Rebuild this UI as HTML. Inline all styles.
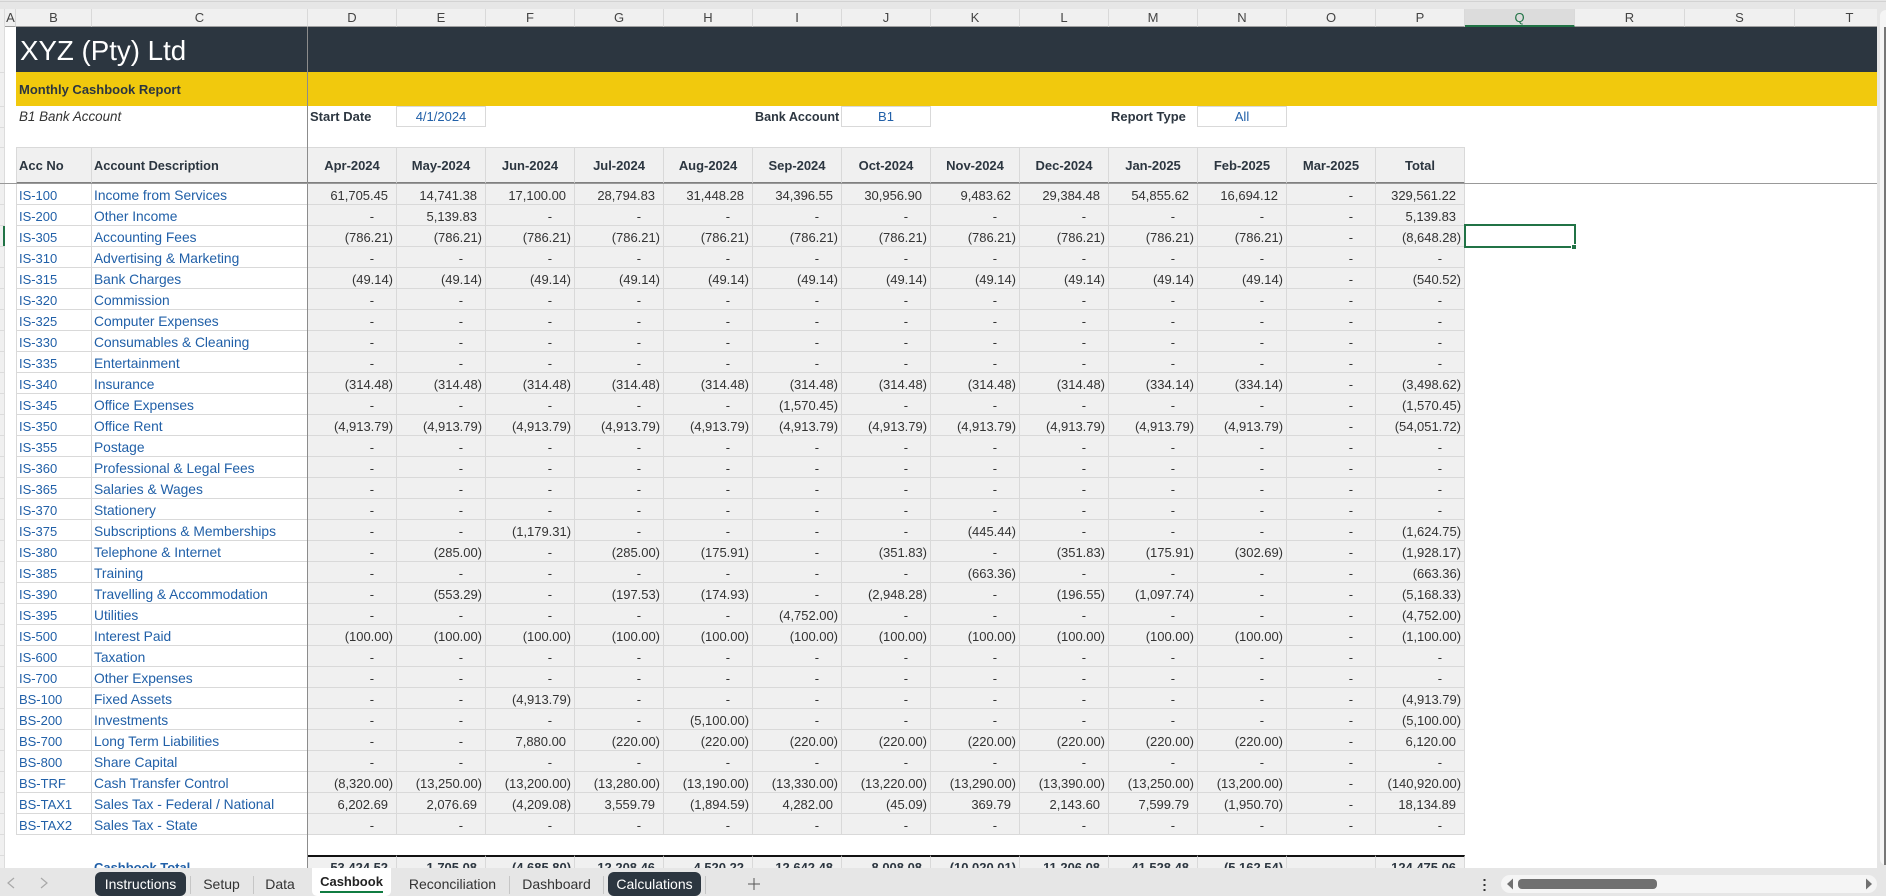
<!DOCTYPE html>
<html lang="en"><head><meta charset="utf-8"><title>Monthly Cashbook Report</title>
<style>
*{box-sizing:border-box}
html,body{margin:0;padding:0;width:1886px;height:896px;overflow:hidden;background:#e6e6e6;font-family:"Liberation Sans",sans-serif}
.p{position:absolute}
#sheet{position:absolute;left:0;top:0;width:1877px;height:868px;overflow:hidden;background:#fff}
.ch{position:absolute;top:9px;height:18px;background:#f0f0f0;border-bottom:1px solid #a0a0a0;border-right:1px solid #d9d9d9;text-align:center;font-size:13px;line-height:17px;color:#444}
table{position:absolute;left:16px;top:147px;border-collapse:separate;border-spacing:0;table-layout:fixed;width:1449px;font-size:13px;letter-spacing:-.02px;color:#333}
td,th{height:21px;padding:3px 8px 0 0;line-height:17px;text-align:right;white-space:nowrap;overflow:hidden;background:#f0f0f0;border-right:1px solid #d9d9d9;border-bottom:1px solid #d9d9d9}
th{height:37px;padding:0;text-align:center;font-weight:bold;color:#2c3640;border-top:1px solid #d9d9d9;border-bottom:2px solid #808080}
th.l{text-align:left;padding-left:2px}
th:first-child,td.a{border-left:1px solid #d9d9d9}
td.a,td.b{text-align:left;padding-left:2px;padding-right:0;background:#fff;color:#2160a8}
td.b{border-right:0;font-size:13.8px}
th.c{border-right:0;font-size:12.8px}
td.n{padding-right:3px}
td.d{padding-right:22px}
tr.t td{border-top:0;border-bottom:0;font-weight:bold;color:#2c3640}
tr.t td.a,tr.t td.b{border:0;background:#fff}
tr.t td.b{color:#2160a8;font-size:13px}
tr.t td.x{border-top:2px solid #111;padding-top:1px}
tr.g td{background:#fff;border:0;height:20px;padding:0}
.box{position:absolute;top:106px;height:21px;width:90px;border:1px solid #d9d9d9;text-align:center;font-size:13px;line-height:20px;color:#2160a8;background:#fff}
.lb{position:absolute;top:107px;font-size:13px;line-height:20px;color:#2c3640;font-weight:bold;white-space:nowrap}
.tab{position:absolute;top:872px;height:24px;font-size:14px;line-height:24px;color:#333;text-align:center;white-space:nowrap}
.dk{background:#2c3640;color:#fff;border-radius:6px}
.sep{position:absolute;top:876px;width:1px;height:18px;background:#c6c6c6}
.rl{position:absolute;left:0;width:5px;height:1px;background:#dcdcdc}
</style></head><body>
<div class="p" style="left:0;top:1px;width:1886px;height:1px;background:#d2d2d2"></div>
<div id="sheet">
<div class="p" style="left:0;top:0;width:1877px;height:9px;background:#e6e6e6"></div>
<div class="p" style="left:0;top:1px;width:1877px;height:1px;background:#d2d2d2"></div>
<div class="p" style="left:0;top:9px;width:5px;height:859px;background:#f0f0f0;border-right:1px solid #dcdcdc"></div>
<div class="p" style="left:3px;top:225px;width:2px;height:21px;background:#217346"></div>
<div class="rl" style="top:72px"></div><div class="rl" style="top:106px"></div><div class="rl" style="top:127px"></div><div class="rl" style="top:147px"></div><div class="rl" style="top:204px"></div><div class="rl" style="top:225px"></div><div class="rl" style="top:246px"></div><div class="rl" style="top:267px"></div><div class="rl" style="top:288px"></div><div class="rl" style="top:309px"></div><div class="rl" style="top:330px"></div><div class="rl" style="top:351px"></div><div class="rl" style="top:372px"></div><div class="rl" style="top:393px"></div><div class="rl" style="top:414px"></div><div class="rl" style="top:435px"></div><div class="rl" style="top:456px"></div><div class="rl" style="top:477px"></div><div class="rl" style="top:498px"></div><div class="rl" style="top:519px"></div><div class="rl" style="top:540px"></div><div class="rl" style="top:561px"></div><div class="rl" style="top:582px"></div><div class="rl" style="top:603px"></div><div class="rl" style="top:624px"></div><div class="rl" style="top:645px"></div><div class="rl" style="top:666px"></div><div class="rl" style="top:687px"></div><div class="rl" style="top:708px"></div><div class="rl" style="top:729px"></div><div class="rl" style="top:750px"></div><div class="rl" style="top:771px"></div><div class="rl" style="top:792px"></div><div class="rl" style="top:813px"></div><div class="rl" style="top:834px"></div><div class="rl" style="top:855px"></div>
<div class="ch" style="left:5px;width:11px;padding-left:1px">A</div>
<div class="ch" style="left:16px;width:76px">B</div>
<div class="ch" style="left:92px;width:216px">C</div>
<div class="ch" style="left:308px;width:89px">D</div>
<div class="ch" style="left:397px;width:89px">E</div>
<div class="ch" style="left:486px;width:89px">F</div>
<div class="ch" style="left:575px;width:89px">G</div>
<div class="ch" style="left:664px;width:89px">H</div>
<div class="ch" style="left:753px;width:89px">I</div>
<div class="ch" style="left:842px;width:89px">J</div>
<div class="ch" style="left:931px;width:89px">K</div>
<div class="ch" style="left:1020px;width:89px">L</div>
<div class="ch" style="left:1109px;width:89px">M</div>
<div class="ch" style="left:1198px;width:89px">N</div>
<div class="ch" style="left:1287px;width:89px">O</div>
<div class="ch" style="left:1376px;width:89px">P</div>
<div class="ch" style="left:1465px;width:110px;background:#dcdcdc;color:#217346;border-bottom:2px solid #217346">Q</div>
<div class="ch" style="left:1575px;width:110px">R</div>
<div class="ch" style="left:1685px;width:110px">S</div>
<div class="ch" style="left:1795px;width:110px">T</div>

<div class="p" style="left:16px;top:27px;width:1861px;height:45px;background:#2c3640"></div>
<div class="p" style="left:16px;top:72px;width:1861px;height:34px;background:#f1c90d"></div>
<div class="p" style="left:20px;top:34px;font-size:27.7px;line-height:34px;color:#fff;white-space:nowrap">XYZ (Pty) Ltd</div>
<div class="p" style="left:19px;top:79.500px;font-size:13px;line-height:20px;font-weight:bold;color:#2c3640;white-space:nowrap">Monthly Cashbook Report</div>
<div class="p" style="left:19px;top:106.500px;font-size:13.4px;line-height:20px;font-style:italic;color:#333;white-space:nowrap">B1 Bank Account</div>
<div class="lb" style="left:310px">Start Date</div>
<div class="box" style="left:396px">4/1/2024</div>
<div class="lb" style="left:755px;font-size:12.6px">Bank Account</div>
<div class="box" style="left:841px">B1</div>
<div class="lb" style="left:1111px">Report Type</div>
<div class="box" style="left:1197px">All</div>

<table>
<colgroup><col style="width:76px"><col style="width:216px"><col style="width:89px"><col style="width:89px"><col style="width:89px"><col style="width:89px"><col style="width:89px"><col style="width:89px"><col style="width:89px"><col style="width:89px"><col style="width:89px"><col style="width:89px"><col style="width:89px"><col style="width:89px"><col style="width:89px"></colgroup>
<tr><th class="l">Acc No<th class="l c">Account Description<th>Apr-2024<th>May-2024<th>Jun-2024<th>Jul-2024<th>Aug-2024<th>Sep-2024<th>Oct-2024<th>Nov-2024<th>Dec-2024<th>Jan-2025<th>Feb-2025<th>Mar-2025<th>Total
<tr><td class="a">IS-100<td class="b">Income from Services<td>61,705.45<td>14,741.38<td>17,100.00<td>28,794.83<td>31,448.28<td>34,396.55<td>30,956.90<td>9,483.62<td>29,384.48<td>54,855.62<td>16,694.12<td class="d">-<td>329,561.22
<tr><td class="a">IS-200<td class="b">Other Income<td class="d">-<td>5,139.83<td class="d">-<td class="d">-<td class="d">-<td class="d">-<td class="d">-<td class="d">-<td class="d">-<td class="d">-<td class="d">-<td class="d">-<td>5,139.83
<tr><td class="a">IS-305<td class="b">Accounting Fees<td class="n">(786.21)<td class="n">(786.21)<td class="n">(786.21)<td class="n">(786.21)<td class="n">(786.21)<td class="n">(786.21)<td class="n">(786.21)<td class="n">(786.21)<td class="n">(786.21)<td class="n">(786.21)<td class="n">(786.21)<td class="d">-<td class="n">(8,648.28)
<tr><td class="a">IS-310<td class="b">Advertising &amp; Marketing<td class="d">-<td class="d">-<td class="d">-<td class="d">-<td class="d">-<td class="d">-<td class="d">-<td class="d">-<td class="d">-<td class="d">-<td class="d">-<td class="d">-<td class="d">-
<tr><td class="a">IS-315<td class="b">Bank Charges<td class="n">(49.14)<td class="n">(49.14)<td class="n">(49.14)<td class="n">(49.14)<td class="n">(49.14)<td class="n">(49.14)<td class="n">(49.14)<td class="n">(49.14)<td class="n">(49.14)<td class="n">(49.14)<td class="n">(49.14)<td class="d">-<td class="n">(540.52)
<tr><td class="a">IS-320<td class="b">Commission<td class="d">-<td class="d">-<td class="d">-<td class="d">-<td class="d">-<td class="d">-<td class="d">-<td class="d">-<td class="d">-<td class="d">-<td class="d">-<td class="d">-<td class="d">-
<tr><td class="a">IS-325<td class="b">Computer Expenses<td class="d">-<td class="d">-<td class="d">-<td class="d">-<td class="d">-<td class="d">-<td class="d">-<td class="d">-<td class="d">-<td class="d">-<td class="d">-<td class="d">-<td class="d">-
<tr><td class="a">IS-330<td class="b">Consumables &amp; Cleaning<td class="d">-<td class="d">-<td class="d">-<td class="d">-<td class="d">-<td class="d">-<td class="d">-<td class="d">-<td class="d">-<td class="d">-<td class="d">-<td class="d">-<td class="d">-
<tr><td class="a">IS-335<td class="b">Entertainment<td class="d">-<td class="d">-<td class="d">-<td class="d">-<td class="d">-<td class="d">-<td class="d">-<td class="d">-<td class="d">-<td class="d">-<td class="d">-<td class="d">-<td class="d">-
<tr><td class="a">IS-340<td class="b">Insurance<td class="n">(314.48)<td class="n">(314.48)<td class="n">(314.48)<td class="n">(314.48)<td class="n">(314.48)<td class="n">(314.48)<td class="n">(314.48)<td class="n">(314.48)<td class="n">(314.48)<td class="n">(334.14)<td class="n">(334.14)<td class="d">-<td class="n">(3,498.62)
<tr><td class="a">IS-345<td class="b">Office Expenses<td class="d">-<td class="d">-<td class="d">-<td class="d">-<td class="d">-<td class="n">(1,570.45)<td class="d">-<td class="d">-<td class="d">-<td class="d">-<td class="d">-<td class="d">-<td class="n">(1,570.45)
<tr><td class="a">IS-350<td class="b">Office Rent<td class="n">(4,913.79)<td class="n">(4,913.79)<td class="n">(4,913.79)<td class="n">(4,913.79)<td class="n">(4,913.79)<td class="n">(4,913.79)<td class="n">(4,913.79)<td class="n">(4,913.79)<td class="n">(4,913.79)<td class="n">(4,913.79)<td class="n">(4,913.79)<td class="d">-<td class="n">(54,051.72)
<tr><td class="a">IS-355<td class="b">Postage<td class="d">-<td class="d">-<td class="d">-<td class="d">-<td class="d">-<td class="d">-<td class="d">-<td class="d">-<td class="d">-<td class="d">-<td class="d">-<td class="d">-<td class="d">-
<tr><td class="a">IS-360<td class="b">Professional &amp; Legal Fees<td class="d">-<td class="d">-<td class="d">-<td class="d">-<td class="d">-<td class="d">-<td class="d">-<td class="d">-<td class="d">-<td class="d">-<td class="d">-<td class="d">-<td class="d">-
<tr><td class="a">IS-365<td class="b">Salaries &amp; Wages<td class="d">-<td class="d">-<td class="d">-<td class="d">-<td class="d">-<td class="d">-<td class="d">-<td class="d">-<td class="d">-<td class="d">-<td class="d">-<td class="d">-<td class="d">-
<tr><td class="a">IS-370<td class="b">Stationery<td class="d">-<td class="d">-<td class="d">-<td class="d">-<td class="d">-<td class="d">-<td class="d">-<td class="d">-<td class="d">-<td class="d">-<td class="d">-<td class="d">-<td class="d">-
<tr><td class="a">IS-375<td class="b">Subscriptions &amp; Memberships<td class="d">-<td class="d">-<td class="n">(1,179.31)<td class="d">-<td class="d">-<td class="d">-<td class="d">-<td class="n">(445.44)<td class="d">-<td class="d">-<td class="d">-<td class="d">-<td class="n">(1,624.75)
<tr><td class="a">IS-380<td class="b">Telephone &amp; Internet<td class="d">-<td class="n">(285.00)<td class="d">-<td class="n">(285.00)<td class="n">(175.91)<td class="d">-<td class="n">(351.83)<td class="d">-<td class="n">(351.83)<td class="n">(175.91)<td class="n">(302.69)<td class="d">-<td class="n">(1,928.17)
<tr><td class="a">IS-385<td class="b">Training<td class="d">-<td class="d">-<td class="d">-<td class="d">-<td class="d">-<td class="d">-<td class="d">-<td class="n">(663.36)<td class="d">-<td class="d">-<td class="d">-<td class="d">-<td class="n">(663.36)
<tr><td class="a">IS-390<td class="b">Travelling &amp; Accommodation<td class="d">-<td class="n">(553.29)<td class="d">-<td class="n">(197.53)<td class="n">(174.93)<td class="d">-<td class="n">(2,948.28)<td class="d">-<td class="n">(196.55)<td class="n">(1,097.74)<td class="d">-<td class="d">-<td class="n">(5,168.33)
<tr><td class="a">IS-395<td class="b">Utilities<td class="d">-<td class="d">-<td class="d">-<td class="d">-<td class="d">-<td class="n">(4,752.00)<td class="d">-<td class="d">-<td class="d">-<td class="d">-<td class="d">-<td class="d">-<td class="n">(4,752.00)
<tr><td class="a">IS-500<td class="b">Interest Paid<td class="n">(100.00)<td class="n">(100.00)<td class="n">(100.00)<td class="n">(100.00)<td class="n">(100.00)<td class="n">(100.00)<td class="n">(100.00)<td class="n">(100.00)<td class="n">(100.00)<td class="n">(100.00)<td class="n">(100.00)<td class="d">-<td class="n">(1,100.00)
<tr><td class="a">IS-600<td class="b">Taxation<td class="d">-<td class="d">-<td class="d">-<td class="d">-<td class="d">-<td class="d">-<td class="d">-<td class="d">-<td class="d">-<td class="d">-<td class="d">-<td class="d">-<td class="d">-
<tr><td class="a">IS-700<td class="b">Other Expenses<td class="d">-<td class="d">-<td class="d">-<td class="d">-<td class="d">-<td class="d">-<td class="d">-<td class="d">-<td class="d">-<td class="d">-<td class="d">-<td class="d">-<td class="d">-
<tr><td class="a">BS-100<td class="b">Fixed Assets<td class="d">-<td class="d">-<td class="n">(4,913.79)<td class="d">-<td class="d">-<td class="d">-<td class="d">-<td class="d">-<td class="d">-<td class="d">-<td class="d">-<td class="d">-<td class="n">(4,913.79)
<tr><td class="a">BS-200<td class="b">Investments<td class="d">-<td class="d">-<td class="d">-<td class="d">-<td class="n">(5,100.00)<td class="d">-<td class="d">-<td class="d">-<td class="d">-<td class="d">-<td class="d">-<td class="d">-<td class="n">(5,100.00)
<tr><td class="a">BS-700<td class="b">Long Term Liabilities<td class="d">-<td class="d">-<td>7,880.00<td class="n">(220.00)<td class="n">(220.00)<td class="n">(220.00)<td class="n">(220.00)<td class="n">(220.00)<td class="n">(220.00)<td class="n">(220.00)<td class="n">(220.00)<td class="d">-<td>6,120.00
<tr><td class="a">BS-800<td class="b">Share Capital<td class="d">-<td class="d">-<td class="d">-<td class="d">-<td class="d">-<td class="d">-<td class="d">-<td class="d">-<td class="d">-<td class="d">-<td class="d">-<td class="d">-<td class="d">-
<tr><td class="a">BS-TRF<td class="b">Cash Transfer Control<td class="n">(8,320.00)<td class="n">(13,250.00)<td class="n">(13,200.00)<td class="n">(13,280.00)<td class="n">(13,190.00)<td class="n">(13,330.00)<td class="n">(13,220.00)<td class="n">(13,290.00)<td class="n">(13,390.00)<td class="n">(13,250.00)<td class="n">(13,200.00)<td class="d">-<td class="n">(140,920.00)
<tr><td class="a">BS-TAX1<td class="b">Sales Tax - Federal / National<td>6,202.69<td>2,076.69<td class="n">(4,209.08)<td>3,559.79<td class="n">(1,894.59)<td>4,282.00<td class="n">(45.09)<td>369.79<td>2,143.60<td>7,599.79<td class="n">(1,950.70)<td class="d">-<td>18,134.89
<tr><td class="a">BS-TAX2<td class="b">Sales Tax - State<td class="d">-<td class="d">-<td class="d">-<td class="d">-<td class="d">-<td class="d">-<td class="d">-<td class="d">-<td class="d">-<td class="d">-<td class="d">-<td class="d">-<td class="d">-
<tr class="g"><td colspan="15">
<tr class="t"><td class="a"><td class="b">Cashbook Total<td class="x">53,424.52<td class="x">1,705.08<td class="x n">(4,685.80)<td class="x">12,208.46<td class="x">4,520.22<td class="x">12,642.48<td class="x">8,008.08<td class="x n">(10,020.01)<td class="x">11,206.08<td class="x">41,528.48<td class="x n">(5,162.54)<td class="x"><td class="x">124,475.06
</table>

<div class="p" style="left:307px;top:27px;width:1px;height:841px;background:#8c8c8c"></div>
<div class="p" style="left:0;top:183px;width:1877px;height:1px;background:#999"></div>
<div class="p" style="left:1464px;top:224px;width:112px;height:24px;border:2px solid #217346"></div>
<div class="p" style="left:1571px;top:244px;width:6px;height:6px;background:#217346;border:1px solid #fff"></div>
</div>

<div class="p" style="left:1880px;top:10px;width:6px;height:855px;background:#f5f5f5;border-radius:6px 0 0 6px"></div>
<div class="p" style="left:1884px;top:27px;width:2px;height:838px;background:#777"></div>

<svg class="p" style="left:0;top:868px" width="60" height="28"><path d="M14 10l-6 5 6 5M41 10l6 5-6 5" fill="none" stroke="#a8a8a8" stroke-width="1.2"/></svg>
<div class="tab dk" style="left:95px;width:91px">Instructions</div>
<div class="sep" style="left:190px"></div>
<div class="tab" style="left:190px;width:63px">Setup</div>
<div class="sep" style="left:253px"></div>
<div class="tab" style="left:253px;width:54px">Data</div>
<div class="p" style="left:312px;top:868px;width:79px;height:28px;background:#fff;border-radius:0 0 5px 5px"></div>
<div class="tab" style="left:312px;top:868px;width:79px;font-weight:bold;font-size:13px;line-height:27px;color:#222">Cashbook</div>
<div class="p" style="left:320px;top:891px;width:63px;height:2px;background:#107c41"></div>
<div class="tab" style="left:396px;width:113px">Reconciliation</div>
<div class="sep" style="left:509px"></div>
<div class="tab" style="left:510px;width:93px">Dashboard</div>
<div class="sep" style="left:603px"></div>
<div class="tab dk" style="left:608px;width:93px">Calculations</div>
<div class="sep" style="left:705px"></div>
<svg class="p" style="left:745px;top:875px" width="18" height="18"><path d="M9 3v12M3 9h12" stroke="#555" stroke-width="1" fill="none"/></svg>

<svg class="p" style="left:1480px;top:868px" width="406" height="28"><path d="M3.500 11h2v2h-2zM3.500 16h2v2h-2zM3.500 21h2v2h-2z" fill="#333"/><rect x="21" y="7" width="376" height="18" rx="9" fill="#f5f5f5"/><path d="M33 10.500v11l-6-5.500z" fill="#707070"/><rect x="38" y="11" width="139" height="10" rx="4" fill="#707070"/><path d="M386 10.500v11l6-5.500z" fill="#707070"/></svg>
</body></html>
